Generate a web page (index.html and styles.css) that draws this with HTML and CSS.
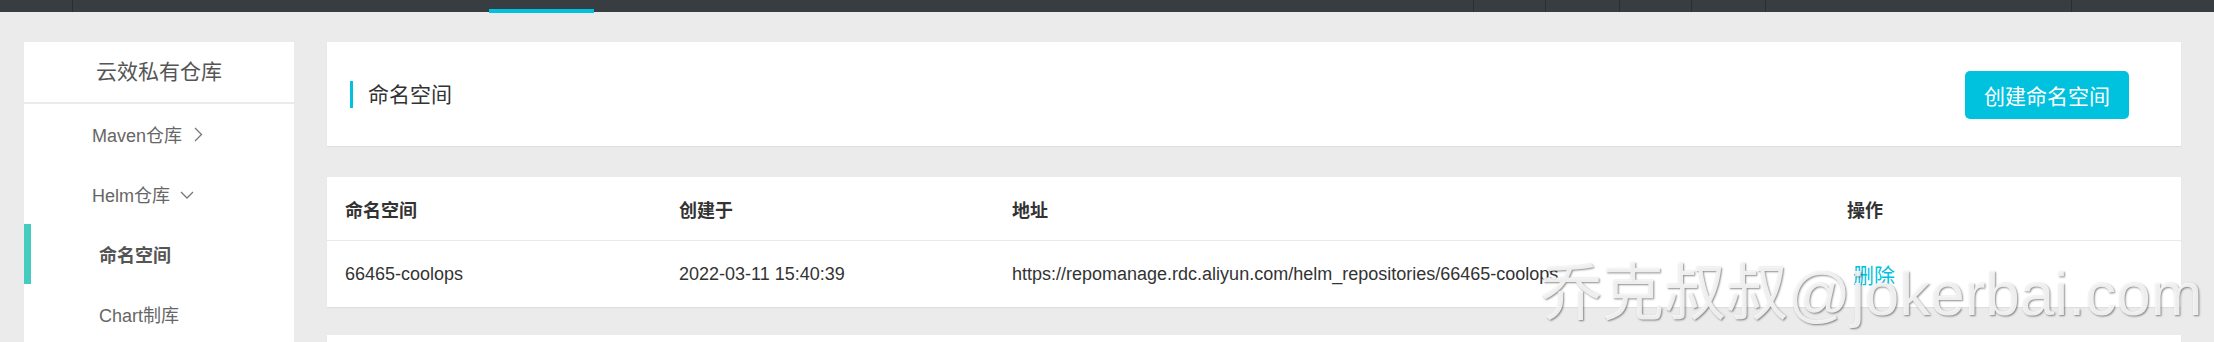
FILE: index.html
```html
<!DOCTYPE html>
<html lang="zh-CN">
<head>
<meta charset="utf-8">
<title>命名空间 - 云效私有仓库</title>
<link rel="stylesheet" href="styles.css">
</head>
<body>
<header class="topbar">
  <div class="nav-logo"></div>
  <div class="nav-tab"></div>
  <div class="nav-right">
    <div class="nav-item w72"></div>
    <div class="nav-item w74"></div>
    <div class="nav-item w72"></div>
    <div class="nav-item w74"></div>
    <div class="nav-item w306"></div>
    <div class="nav-item w145"></div>
  </div>
</header>

<div class="layout">
  <aside class="sidebar">
    <div class="side-title">云效私有仓库</div>
    <nav class="side-menu">
      <div class="menu-item">Maven仓库
        <svg class="chev-right" width="9" height="15" viewBox="0 0 9 15"><polyline points="1,1 7.5,7.5 1,14" fill="none" stroke="#777" stroke-width="1.3"/></svg>
      </div>
      <div class="menu-item">Helm仓库
        <svg class="chev-down" width="14" height="8" viewBox="0 0 14 8"><polyline points="1,1 7,7 13,1" fill="none" stroke="#777" stroke-width="1.3"/></svg>
      </div>
      <div class="menu-item sub active">命名空间</div>
      <div class="menu-item sub">Chart制库</div>
    </nav>
  </aside>

  <main class="main">
    <section class="card head-card">
      <h2 class="page-title">命名空间</h2>
      <button class="btn-primary">创建命名空间</button>
    </section>

    <section class="card table-card">
      <div class="t-row t-head">
        <div>命名空间</div>
        <div>创建于</div>
        <div>地址</div>
        <div>操作</div>
      </div>
      <div class="t-row t-body">
        <div>66465-coolops</div>
        <div>2022-03-11 15:40:39</div>
        <div>https://repomanage.rdc.aliyun.com/helm_repositories/66465-coolops</div>
        <div><a class="link">删除</a></div>
      </div>
    </section>

    <section class="card next-card"></section>
  </main>
</div>

<div class="watermark">乔克叔叔@jokerbai.com</div>
</body>
</html>
```

FILE: styles.css
```css
* { box-sizing: border-box; }

html, body {
  margin: 0;
  padding: 0;
}

body {
  width: 2214px;
  height: 342px;
  overflow: hidden;
  background: #ebebeb;
  font-family: "Liberation Sans", Arial, "Noto Sans CJK SC", sans-serif;
  color: #333;
  position: relative;
}

/* top bar */
.topbar {
  height: 12px;
  background: #373d41;
  display: flex;
  align-items: flex-start;
}
.nav-logo {
  width: 73px;
  height: 12px;
  border-right: 1px solid #2a2e31;
}
.nav-tab {
  margin-left: 416px;
  width: 105px;
  height: 13px;
  border-bottom: 4px solid #00c1de;
}
.nav-right {
  margin-left: auto;
  display: flex;
  height: 12px;
}
.nav-item {
  height: 12px;
  border-left: 1px solid #2a2e31;
}
.w72 { width: 72px; }
.w74 { width: 74px; }
.w306 { width: 306px; }
.w145 { width: 143px; }

/* layout */
.layout {
  display: flex;
  gap: 33px;
  padding: 30px 0 0 24px;
  height: 330px;
  overflow: hidden;
}

.sidebar {
  width: 270px;
  flex: none;
  display: flex;
  flex-direction: column;
  gap: 2px;
}
.side-title {
  flex: none;
  background: #fff;
  height: 60px;
  line-height: 60px;
  text-align: center;
  font-size: 21px;
  color: #555;
}
.side-menu {
  flex: none;
  background: #fff;
  height: 240px;
}
.menu-item {
  height: 60px;
  display: flex;
  align-items: center;
  padding-left: 68px;
  font-size: 18px;
  color: #666;
}
.menu-item.sub {
  padding-left: 75px;
}
.menu-item.active {
  border-left: 7px solid #45cbbf;
  padding-left: 68px;
  font-weight: bold;
  color: #555;
}
.chev-right { margin-left: 12px; }
.chev-down { margin-left: 10px; margin-top: 2px; }

/* main */
.main {
  width: 1854px;
  flex: none;
  display: flex;
  flex-direction: column;
}
.card {
  flex: none;
  background: #fff;
  box-shadow: 0 1px 1px rgba(0, 0, 0, 0.05);
}
.head-card {
  height: 104px;
  display: flex;
  align-items: center;
  justify-content: space-between;
  padding: 0 52px 0 23px;
}
.page-title {
  margin: 0;
  border-left: 3px solid #00c1de;
  height: 27px;
  line-height: 27px;
  padding-left: 15px;
  font-size: 21px;
  font-weight: normal;
  color: #333;
}
.btn-primary {
  width: 164px;
  height: 48px;
  margin-top: 2px;
  border: none;
  border-radius: 5px;
  background: #00c1de;
  color: #fff;
  font-family: inherit;
  font-size: 21px;
  padding: 0;
}

.table-card {
  margin-top: 31px;
}
.t-row {
  display: grid;
  grid-template-columns: 334px 333px 835px 1fr;
  align-items: center;
  padding-left: 18px;
  font-size: 18px;
  color: #333;
}
.t-head {
  height: 64px;
  border-bottom: 1px solid #e9e9e9;
  font-weight: bold;
}
.t-body {
  height: 66px;
}
.link {
  color: #00c1de;
  font-size: 21px;
  margin-left: 6px;
}

.next-card {
  margin-top: 28px;
  height: 20px;
}

/* watermark overlay */
.watermark {
  position: absolute;
  left: 1540px;
  top: 263px;
  font-family: "Liberation Sans", "Noto Sans CJK SC", sans-serif;
  font-size: 62px;
  line-height: 62px;
  white-space: nowrap;
  color: rgba(246, 246, 246, 0.92);
  text-shadow: 1px 1px 2px rgba(0, 0, 0, 0.45);
  pointer-events: none;
}
```
